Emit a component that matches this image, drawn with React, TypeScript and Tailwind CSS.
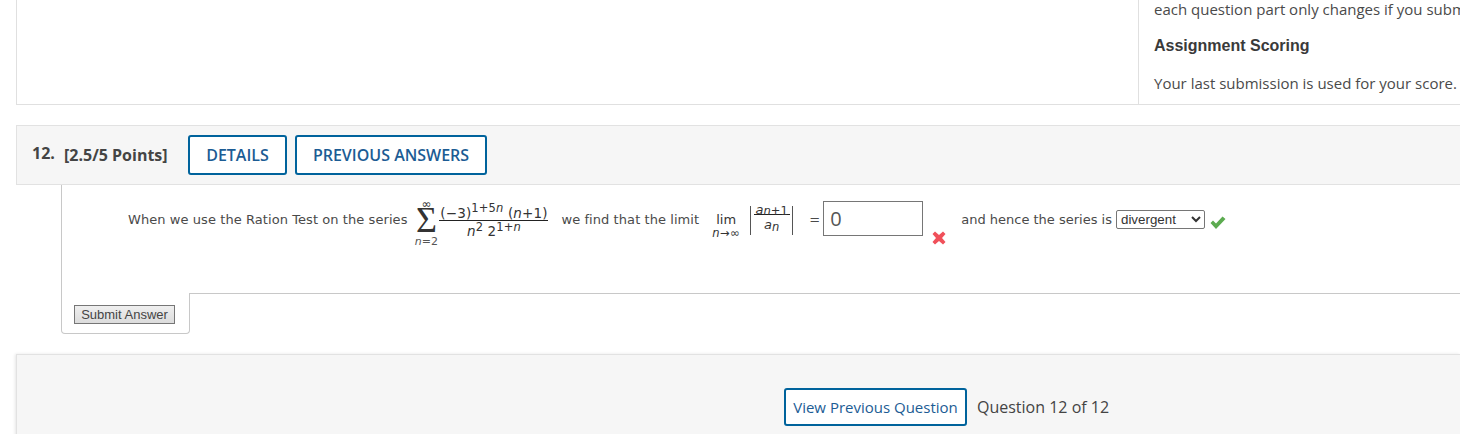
export default function App() {
  return (
    <div className="w-[1460px] h-[434px] overflow-hidden bg-white font-['Open_Sans',sans-serif] text-[#4a4a4a]">
      {/* Top card */}
      <div className="ml-4 h-[105px] border-l border-b border-[#e0e0e0] flex justify-end">
        <div className="w-[322px] border-l border-[#e0e0e0] pl-[15px] overflow-hidden whitespace-nowrap text-[15px]">
          <div className="leading-5 -mt-[1px]">each question part only changes if you submit</div>
          <div className="mt-[17px] leading-5 font-bold font-['Liberation_Sans',sans-serif] text-[16px] text-[#3a3a3a]">Assignment Scoring</div>
          <div className="mt-[17px] leading-5">Your last submission is used for your score.</div>
        </div>
      </div>

      {/* Question header */}
      <div className="mt-5 ml-4 h-[60px] bg-[#f6f6f6] border border-r-0 border-[#e2e2e2] flex items-center pl-[15px] whitespace-nowrap">
        <span className="w-[32px] font-bold text-[16px] text-[#444] -mt-1">12.</span>
        <span className="w-[124px] font-bold text-[16px] text-[#444]">[2.5/5 Points]</span>
        <button className="w-[99px] h-10 border-2 border-[#00639c] rounded-[3px] bg-white text-[16px] font-semibold text-[#1c5c94]">DETAILS</button>
        <button className="ml-2 w-[192px] h-10 border-2 border-[#00639c] rounded-[3px] bg-white text-[16px] font-semibold text-[#1c5c94]">PREVIOUS ANSWERS</button>
      </div>

      {/* Question body */}
      <div className="ml-[61px] h-[149px]">
        <div className="h-[108px] border-l border-[#c8c8c8] pl-[66px] pt-[16px]">
          <div className="flex items-start whitespace-nowrap font-['DejaVu_Sans',sans-serif] text-[13px] tracking-[0.07px] text-[#4a4a4a]">
            <span className="mt-[9px] leading-5">When we use the Ration Test on the series</span>

            {/* sum */}
            <div className="ml-[6px] w-[26px] flex flex-col items-center text-[#333]">
              <span className="text-[12px] leading-[6px]">∞</span>
              <span className="h-[27px] text-[36px] leading-[27px] font-['Liberation_Serif',serif]">Σ</span>
              <span className="text-[11px] leading-[12px] mt-[2px] text-[#555]"><i>n</i>=2</span>
            </div>

            {/* fraction */}
            <div className="w-[109px] flex flex-col items-center text-[13.5px] tracking-[0.15px] text-[#333] mt-[1px]">
              <div className="h-[19px] leading-[23px] border-b border-[#222] w-full text-center">
                (−3)<sup className="text-[11.5px] top-[-6px]">1+5<i>n</i></sup> (<i>n</i>+1)
              </div>
              <div className="leading-[20px]">
                <i>n</i><sup className="text-[11.5px] top-[-5px]">2</sup> 2<sup className="text-[11.5px] top-[-5px]">1+<i>n</i></sup>
              </div>
            </div>

            <span className="ml-[13px] mt-[9px] leading-5">we find that the limit</span>

            {/* limit */}
            <div className="ml-[11px] w-[32px] flex flex-col items-center mt-[10px] text-[#333]">
              <span className="text-[13px] leading-[18px]">lim</span>
              <span className="text-[11.5px] leading-[8px] tracking-[0.5px]"><i>n</i>→∞</span>
            </div>

            {/* absolute value of ratio */}
            <div className="ml-2 w-[43px] h-[29px] border-x border-[#555] flex flex-col items-center text-[#333] text-[13px] mt-[5px]">
              <div className="w-[36px] h-[15px] leading-[8px] border-b border-[#222] text-center">
                <i>a</i><sub className="text-[11.5px] bottom-[-1px]"><i>n</i>+1</sub>
              </div>
              <div className="leading-[20px]"><i>a</i><sub className="text-[11.5px] bottom-[-2px]"><i>n</i></sub></div>
            </div>

            <span className="ml-4 mt-[9px] leading-5">=</span>
            <input
              readOnly
              defaultValue="0"
              className="ml-[3px] w-[100px] h-[35px] border border-[#767676] bg-white px-[6px] text-[20px] text-[#555] font-['Open_Sans',sans-serif]"
            />

            {/* wrong mark */}
            <svg className="ml-[9px] mt-[30px]" width="14" height="14" viewBox="0 0 14 14">
              <path d="M3 0.5 7 4 11 0.5 13.5 3 10 7 13.5 11 11 13.5 7 10 3 13.5 0.5 11 4 7 0.5 3Z" fill="#f0505a" />
            </svg>

            <span className="ml-[15px] mt-[9px] leading-5 tracking-normal">and hence the series is</span>
            <select
              defaultValue="divergent"
              className="ml-1 mt-[9px] w-[89px] h-[19px] border border-[#767676] rounded-[2px] bg-white text-[13.33px] leading-none tracking-normal text-[#333] font-['Liberation_Sans',sans-serif]"
            >
              <option value="divergent">divergent</option>
              <option value="convergent">convergent</option>
            </select>

            {/* correct mark */}
            <svg className="ml-[5px] mt-[15px]" width="16" height="14" viewBox="0 0 16 14">
              <path d="M0.5 7 3 4.5 6 7.5 12.5 0.5 15.5 3 6 13Z" fill="#5cab50" />
            </svg>
          </div>
        </div>

        {/* Submit tab */}
        <div className="flex h-[41px]">
          <div className="w-[129px] h-[41px] border-l border-r border-b border-[#c8c8c8] rounded-b-[4px] pl-3 pt-3">
            <button className="block w-[101px] h-[19px] border border-[#767676] bg-gradient-to-b from-[#efefef] to-[#dcdcdc] text-[13px] leading-none text-[#444] font-['Liberation_Sans',sans-serif]">
              Submit Answer
            </button>
          </div>
          <div className="flex-1 border-t border-[#c8c8c8]" />
        </div>
      </div>

      {/* Footer nav */}
      <div className="mt-5 ml-4 h-[90px] bg-[#f6f6f6] border-t border-l border-[#e2e2e2] shadow-[-1px_0_3px_rgba(0,0,0,0.1)] flex items-start pl-[767px] pt-[33px] whitespace-nowrap">
        <button className="w-[183px] h-[38px] border-2 border-[#00639c] rounded-[3px] bg-white text-[15px] text-[#1c5c94]">View Previous Question</button>
        <span className="ml-[10px] mt-[7px] text-[16px] leading-6 text-[#444]">Question 12 of 12</span>
      </div>
    </div>
  )
}
